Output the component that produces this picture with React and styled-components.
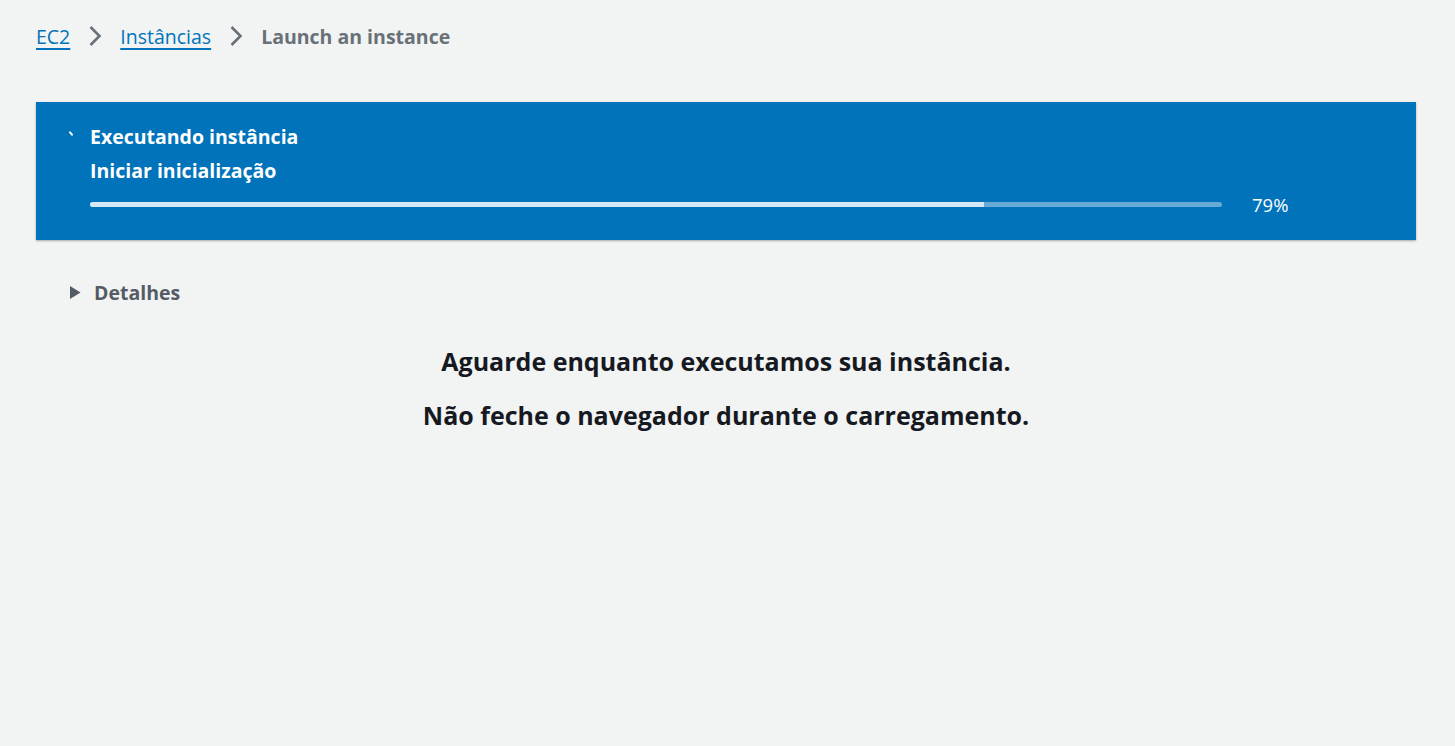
import styled, { createGlobalStyle } from "styled-components"

const GlobalStyle = createGlobalStyle`
  html, body {
    margin: 0;
    padding: 0;
    background: #f2f3f3;
    font-family: "Open Sans", "Noto Sans", Arial, sans-serif;
  }
`

const Page = styled.div`
  min-height: 746px;
  padding: 21px 39px 0 36px;
  box-sizing: border-box;
`

const Breadcrumbs = styled.nav`
  display: flex;
  align-items: center;
  gap: 17px;
  height: 30px;
  font-size: 19.5px;
`

const Crumb = styled.a`
  color: #0073bb;
  text-decoration: underline;
  text-underline-offset: 4px;
  text-decoration-thickness: 2px;
`

const Current = styled.span`
  color: #687078;
  font-weight: 700;
`

const Chevron = () => (
  <svg width="16" height="24" viewBox="0 0 16 24">
    <path d="M3.5 3 L12.5 12 L3.5 21" fill="none" stroke="#687078" strokeWidth="2.6" />
  </svg>
)

const Banner = styled.div`
  margin-top: 51px;
  background: #0073bb;
  height: 138px;
  box-shadow: 0 1px 2px rgba(0, 28, 36, 0.35);
  padding: 18px 0 0 33px;
  box-sizing: border-box;
  display: flex;
  gap: 10px;
  color: #ffffff;
`

const Spinner = styled.div`
  width: 11px;
  height: 10px;
  margin-top: 10px;
  position: relative;

  &::before {
    content: "";
    position: absolute;
    left: 1px;
    top: 1px;
    width: 2px;
    height: 5px;
    border-radius: 1px;
    background: #ffffff;
    transform: rotate(-40deg);
  }
`

const BannerBody = styled.div`
  display: flex;
  flex-direction: column;
`

const BannerTitle = styled.div`
  font-size: 19.5px;
  font-weight: 700;
  line-height: 34px;
`

const ProgressRow = styled.div`
  display: flex;
  align-items: center;
  gap: 30px;
  margin-top: 4px;
`

const Track = styled.div`
  width: 1132px;
  height: 5px;
  border-radius: 3px;
  background: #66abd6;
  overflow: hidden;
`

const Fill = styled.div`
  height: 100%;
  background: #d5e8f5;
`

const Percent = styled.span`
  font-size: 18.5px;
`

const Details = styled.div`
  display: flex;
  align-items: center;
  gap: 13px;
  margin: 39px 0 0 33px;
  color: #545b64;
  font-size: 19.5px;
  font-weight: 700;
`

const Message = styled.div`
  margin-top: 38px;
  display: flex;
  flex-direction: column;
  align-items: center;
  gap: 20px;
  color: #16191f;
  font-size: 25px;
  font-weight: 700;
  line-height: 34px;
`

export default function App() {
  const progress = 79
  return (
    <>
      <GlobalStyle />
      <Page>
        <Breadcrumbs>
          <Crumb>EC2</Crumb>
          <Chevron />
          <Crumb>Instâncias</Crumb>
          <Chevron />
          <Current>Launch an instance</Current>
        </Breadcrumbs>
        <Banner>
          <Spinner />
          <BannerBody>
            <BannerTitle>Executando instância</BannerTitle>
            <BannerTitle>Iniciar inicialização</BannerTitle>
            <ProgressRow>
              <Track>
                <Fill style={{ width: `${progress}%` }} />
              </Track>
              <Percent>{progress}%</Percent>
            </ProgressRow>
          </BannerBody>
        </Banner>
        <Details>
          <svg width="12" height="15" viewBox="0 0 12 15">
            <path d="M1 1 L11.5 7.5 L1 14 Z" fill="#545b64" />
          </svg>
          Detalhes
        </Details>
        <Message>
          <div>Aguarde enquanto executamos sua instância.</div>
          <div>Não feche o navegador durante o carregamento.</div>
        </Message>
      </Page>
    </>
  )
}
